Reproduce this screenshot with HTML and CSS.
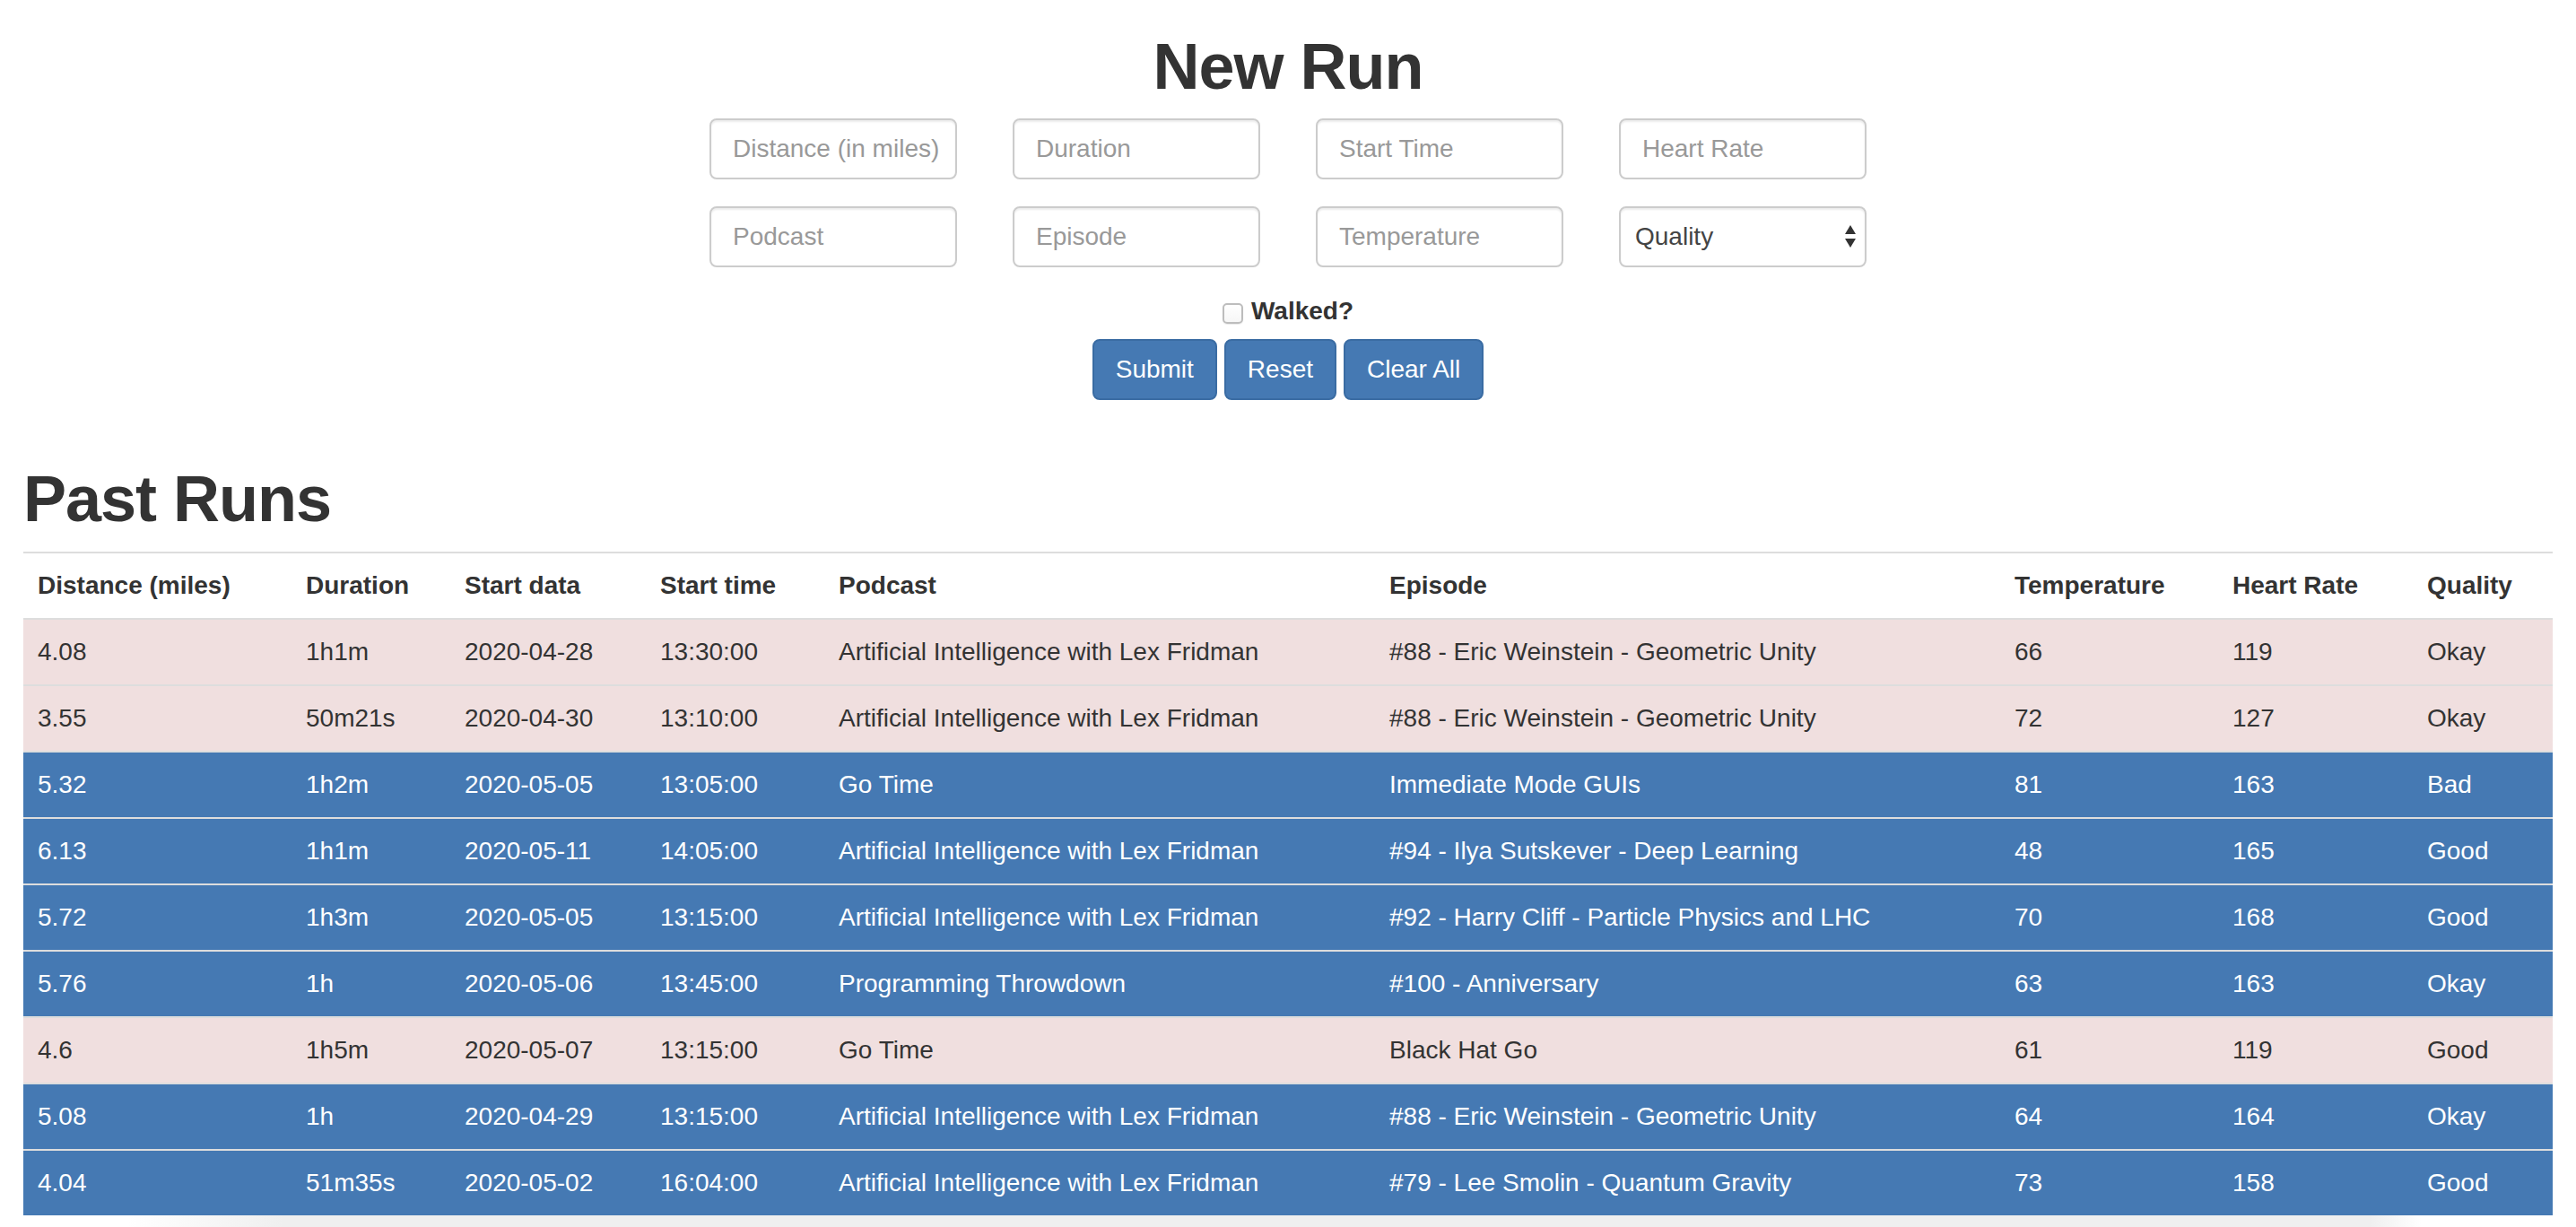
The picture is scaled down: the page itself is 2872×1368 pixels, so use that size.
FILE: index.html
```html
<!DOCTYPE html>
<html lang="en">
<head>
<meta charset="utf-8">
<title>Runs</title>
<link rel="stylesheet" href="styles.css">
</head>
<body>
<div class="page">
  <section class="new-run">
    <h1 class="title">New Run</h1>
    <form class="run-form">
      <div class="field-grid">
        <input class="field" type="text" placeholder="Distance (in miles)">
        <input class="field" type="text" placeholder="Duration">
        <input class="field" type="text" placeholder="Start Time">
        <input class="field" type="text" placeholder="Heart Rate">
        <input class="field" type="text" placeholder="Podcast">
        <input class="field" type="text" placeholder="Episode">
        <input class="field" type="text" placeholder="Temperature">
        <div class="select-wrap">
          <select class="field select">
            <option>Quality</option>
            <option>Good</option>
            <option>Okay</option>
            <option>Bad</option>
          </select>
        </div>
      </div>
      <div class="check-row">
        <label class="check-label"><input class="check" type="checkbox">Walked?</label>
      </div>
      <div class="buttons">
        <button type="button" class="btn">Submit</button>
        <button type="button" class="btn">Reset</button>
        <button type="button" class="btn">Clear All</button>
      </div>
    </form>
  </section>

  <section class="past-runs">
    <h1 class="section-title">Past Runs</h1>
    <table class="runs">
      <colgroup>
        <col class="c1"><col class="c2"><col class="c3"><col class="c4"><col class="c5"><col class="c6"><col class="c7"><col class="c8"><col class="c9">
      </colgroup>
      <thead>
        <tr>
          <th>Distance (miles)</th><th>Duration</th><th>Start data</th><th>Start time</th><th>Podcast</th><th>Episode</th><th>Temperature</th><th>Heart Rate</th><th>Quality</th>
        </tr>
      </thead>
      <tbody>
        <tr class="walk"><td>4.08</td><td>1h1m</td><td>2020-04-28</td><td>13:30:00</td><td>Artificial Intelligence with Lex Fridman</td><td>#88 - Eric Weinstein - Geometric Unity</td><td>66</td><td>119</td><td>Okay</td></tr>
        <tr class="walk"><td>3.55</td><td>50m21s</td><td>2020-04-30</td><td>13:10:00</td><td>Artificial Intelligence with Lex Fridman</td><td>#88 - Eric Weinstein - Geometric Unity</td><td>72</td><td>127</td><td>Okay</td></tr>
        <tr class="run"><td>5.32</td><td>1h2m</td><td>2020-05-05</td><td>13:05:00</td><td>Go Time</td><td>Immediate Mode GUIs</td><td>81</td><td>163</td><td>Bad</td></tr>
        <tr class="run"><td>6.13</td><td>1h1m</td><td>2020-05-11</td><td>14:05:00</td><td>Artificial Intelligence with Lex Fridman</td><td>#94 - Ilya Sutskever - Deep Learning</td><td>48</td><td>165</td><td>Good</td></tr>
        <tr class="run"><td>5.72</td><td>1h3m</td><td>2020-05-05</td><td>13:15:00</td><td>Artificial Intelligence with Lex Fridman</td><td>#92 - Harry Cliff - Particle Physics and LHC</td><td>70</td><td>168</td><td>Good</td></tr>
        <tr class="run"><td>5.76</td><td>1h</td><td>2020-05-06</td><td>13:45:00</td><td>Programming Throwdown</td><td>#100 - Anniversary</td><td>63</td><td>163</td><td>Okay</td></tr>
        <tr class="walk"><td>4.6</td><td>1h5m</td><td>2020-05-07</td><td>13:15:00</td><td>Go Time</td><td>Black Hat Go</td><td>61</td><td>119</td><td>Good</td></tr>
        <tr class="run"><td>5.08</td><td>1h</td><td>2020-04-29</td><td>13:15:00</td><td>Artificial Intelligence with Lex Fridman</td><td>#88 - Eric Weinstein - Geometric Unity</td><td>64</td><td>164</td><td>Okay</td></tr>
        <tr class="run"><td>4.04</td><td>51m35s</td><td>2020-05-02</td><td>16:04:00</td><td>Artificial Intelligence with Lex Fridman</td><td>#79 - Lee Smolin - Quantum Gravity</td><td>73</td><td>158</td><td>Good</td></tr>
      </tbody>
    </table>
  </section>
  <div class="bottom-shade"></div>
</div>
</body>
</html>
```

FILE: styles.css
```css
* { box-sizing: border-box; }

html, body {
  margin: 0;
  padding: 0;
  background: #fff;
}

body {
  font-family: "Liberation Sans", Arial, Helvetica, sans-serif;
  font-size: 28px;
  line-height: 40px;
  color: #333;
}

.page {
  width: 2872px;
}

.new-run {
  text-align: center;
}

.title {
  margin: 35px 0 18px;
  font-size: 72px;
  line-height: 79px;
  font-weight: 700;
  letter-spacing: -1px;
  color: #333;
}

.run-form {
  margin: 0;
}

.field-grid {
  display: grid;
  grid-template-columns: repeat(4, 276px);
  column-gap: 62px;
  row-gap: 30px;
  justify-content: center;
}

.field {
  display: block;
  width: 100%;
  height: 68px;
  padding: 12px 10px 12px 24px;
  font-family: "Liberation Sans", Arial, Helvetica, sans-serif;
  font-size: 28px;
  line-height: 40px;
  color: #555;
  background: #fff;
  border: 2px solid #ccc;
  border-radius: 8px;
  box-shadow: inset 0 2px 2px rgba(0, 0, 0, 0.075);
  outline: none;
}

.field::placeholder {
  color: #999;
  opacity: 1;
}

.select-wrap {
  position: relative;
}

.select {
  appearance: none;
  -webkit-appearance: none;
  padding: 12px 40px 12px 16px;
  color: #444;
}

.select-wrap::before,
.select-wrap::after {
  content: "";
  position: absolute;
  right: 12px;
  width: 0;
  height: 0;
  border-left: 6px solid transparent;
  border-right: 6px solid transparent;
  pointer-events: none;
}

.select-wrap::before {
  top: 21px;
  border-bottom: 10px solid #333;
}

.select-wrap::after {
  top: 36px;
  border-top: 10px solid #333;
}

.check-row {
  margin-top: 29px;
  height: 40px;
}

.check-label {
  font-weight: 700;
  color: #333;
}

.check {
  appearance: none;
  -webkit-appearance: none;
  display: inline-block;
  width: 23px;
  height: 23px;
  margin: 0 9px 0 0;
  vertical-align: -5px;
  border: 2px solid #bdbdbd;
  border-radius: 5px;
  background: linear-gradient(#fff, #f6f6f6);
  box-shadow: 0 1px 1px rgba(0, 0, 0, 0.08);
}

.buttons {
  display: flex;
  justify-content: center;
  gap: 8px;
  margin-top: 11px;
}

.btn {
  height: 68px;
  padding: 12px 24px;
  font-family: "Liberation Sans", Arial, Helvetica, sans-serif;
  font-size: 28px;
  line-height: 40px;
  color: #fff;
  background: #4579b3;
  border: 2px solid #3a6ca3;
  border-radius: 8px;
  cursor: pointer;
}

.past-runs {
  padding: 0 26px;
}

.section-title {
  margin: 71px 0 19px;
  padding-left: 0;
  font-size: 72px;
  line-height: 79px;
  font-weight: 700;
  letter-spacing: -1px;
  color: #333;
}

.runs {
  width: 2820px;
  table-layout: fixed;
  border-collapse: separate;
  border-spacing: 0;
}

.c1 { width: 299px; }
.c2 { width: 177px; }
.c3 { width: 218px; }
.c4 { width: 199px; }
.c5 { width: 614px; }
.c6 { width: 697px; }
.c7 { width: 243px; }
.c8 { width: 217px; }
.c9 { width: 156px; }

.runs th,
.runs td {
  padding: 16px;
  text-align: left;
  vertical-align: top;
  white-space: nowrap;
  line-height: 40px;
}

.runs th {
  font-weight: 700;
  color: #333;
  border-top: 2px solid #ddd;
  border-bottom: 2px solid #ddd;
}

.runs td {
  border-top: 2px solid #ddd;
}

.runs tbody tr:first-child td {
  border-top: 0;
}

.runs tr.walk td {
  background: #f0dfdf;
  color: #333;
}

.runs tr.run td {
  background: #4579b3;
  color: #fff;
}

.bottom-shade {
  height: 15px;
  background: linear-gradient(to right, #fff 5%, #efefef 11%, #efefef 92%, #fff 94%);
}
```
